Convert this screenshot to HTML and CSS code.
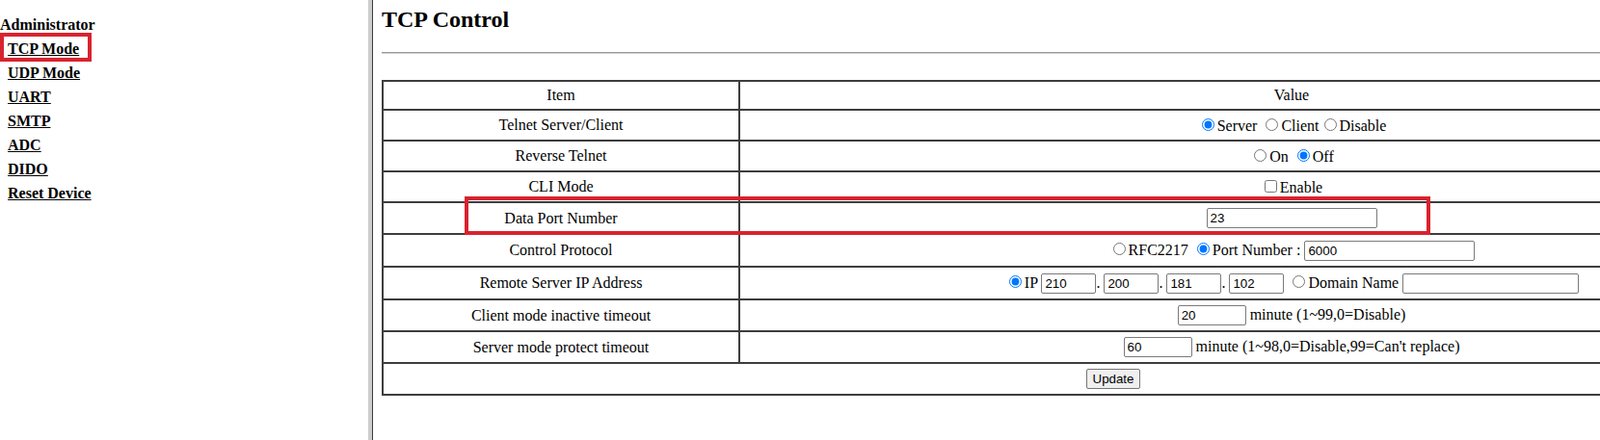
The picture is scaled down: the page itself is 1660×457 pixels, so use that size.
FILE: index.html
```html
<!DOCTYPE html>
<html>
<head>
<meta charset="utf-8">
<title>TCP Control</title>
<link rel="stylesheet" href="styles.css">
</head>
<body>
<div class="page">
  <nav class="side">
    <div class="side-title">Administrator</div>
    <ul class="menu">
      <li><a href="#">TCP Mode</a></li>
      <li><a href="#">UDP Mode</a></li>
      <li><a href="#">UART</a></li>
      <li><a href="#">SMTP</a></li>
      <li><a href="#">ADC</a></li>
      <li><a href="#">DIDO</a></li>
      <li><a href="#">Reset Device</a></li>
    </ul>
    <div class="mark mark-nav"></div>
  </nav>
  <div class="divider"></div>
  <main class="main">
    <div class="content">
      <h2 class="title">TCP Control</h2>
      <hr class="rule">
      <table class="grid">
        <tr>
          <td class="c1">Item</td>
          <td>Value</td>
        </tr>
        <tr>
          <td>Telnet Server/Client</td>
          <td><input type="radio" name="tm" checked>Server <input type="radio" name="tm">Client<input type="radio" name="tm">Disable</td>
        </tr>
        <tr>
          <td>Reverse Telnet</td>
          <td><input type="radio" name="rt">On <input type="radio" name="rt" checked>Off</td>
        </tr>
        <tr>
          <td>CLI Mode</td>
          <td><input type="checkbox">Enable</td>
        </tr>
        <tr>
          <td>Data Port Number</td>
          <td><input type="text" class="txt w177" value="23"></td>
        </tr>
        <tr>
          <td>Control Protocol</td>
          <td><input type="radio" name="cp">RFC2217 <input type="radio" name="cp" checked>Port Number : <input type="text" class="txt w177" value="6000"></td>
        </tr>
        <tr>
          <td>Remote Server IP Address</td>
          <td><input type="radio" name="ip" checked>IP <input type="text" class="txt w57" value="210">. <input type="text" class="txt w57" value="200">. <input type="text" class="txt w57" value="181">. <input type="text" class="txt w57" value="102"> <input type="radio" name="ip">Domain Name <input type="text" class="txt w183" value=""></td>
        </tr>
        <tr>
          <td>Client mode inactive timeout</td>
          <td><input type="text" class="txt w71" value="20"> minute (1~99,0=Disable)</td>
        </tr>
        <tr>
          <td>Server mode protect timeout</td>
          <td><input type="text" class="txt w71" value="60"> minute (1~98,0=Disable,99=Can't replace)</td>
        </tr>
        <tr>
          <td colspan="2"><button type="button" class="btn">Update</button></td>
        </tr>
      </table>
    </div>
  </main>
  <div class="mark mark-row"></div>
</div>
</body>
</html>
```
FILE: styles.css
```css
html, body {
  margin: 0;
  padding: 0;
  background: #ffffff;
}

body {
  font-family: "Liberation Serif", "Times New Roman", serif;
  font-size: 16px;
  color: #000000;
}

.page {
  position: relative;
  display: flex;
  height: 457px;
  overflow: hidden;
}

.side {
  position: relative;
  flex: none;
  width: 382px;
  padding-top: 14px;
  box-sizing: border-box;
}

.side-title {
  font-weight: bold;
  line-height: 24px;
}

.menu {
  list-style: none;
  margin: 0;
  padding: 0 0 0 8px;
}

.menu li {
  line-height: 25px;
}

.menu a {
  color: #000000;
  font-weight: bold;
  text-decoration: underline;
}

.divider {
  flex: none;
  width: 4px;
  background: #cdcdcd;
  border-right: 1px solid #3a3a3a;
}

.main {
  flex: 1;
  min-width: 0;
  overflow: hidden;
}

.content {
  width: 1518px;
  padding-left: 9px;
}

.title {
  font-size: 24px;
  font-weight: bold;
  margin: 7px 0 20px;
}

.rule {
  margin: 0;
  height: 0;
  border: none;
  border-top: 1px solid #9a9a9a;
  border-bottom: 1px solid #cfcfcf;
}

.grid {
  margin-top: 27px;
  width: 1518px;
  table-layout: fixed;
  border-spacing: 0;
  border: 1px solid #3d3d3d;
}

.grid td {
  border: 1px solid #3d3d3d;
  padding: 5px;
  text-align: center;
  vertical-align: middle;
}

.grid td.c1 {
  width: 358px;
}

.txt {
  font-family: "Liberation Sans", Arial, sans-serif;
  font-size: 13.333px;
  height: 21px;
  box-sizing: border-box;
  padding: 1px 3px;
  border: 1px solid #7a7a7a;
  border-radius: 2px;
  color: #000000;
  background: #ffffff;
  margin: 0;
}

.w177 { width: 177px; }
.w183 { width: 183px; }
.w57 { width: 57px; }
.w71 { width: 71px; }

.btn {
  font-family: "Liberation Sans", Arial, sans-serif;
  font-size: 13.333px;
  padding: 1px 6px;
  height: 21px;
  border: 1px solid #767676;
  border-radius: 2px;
  background: #efefef;
  color: #000000;
}

.mark {
  position: absolute;
  box-sizing: border-box;
  border: 4px solid #d8232f;
}

.mark-nav {
  left: 0;
  top: 34px;
  width: 95px;
  height: 30px;
}

.mark-row {
  left: 482px;
  top: 204px;
  width: 1002px;
  height: 40px;
}
```
